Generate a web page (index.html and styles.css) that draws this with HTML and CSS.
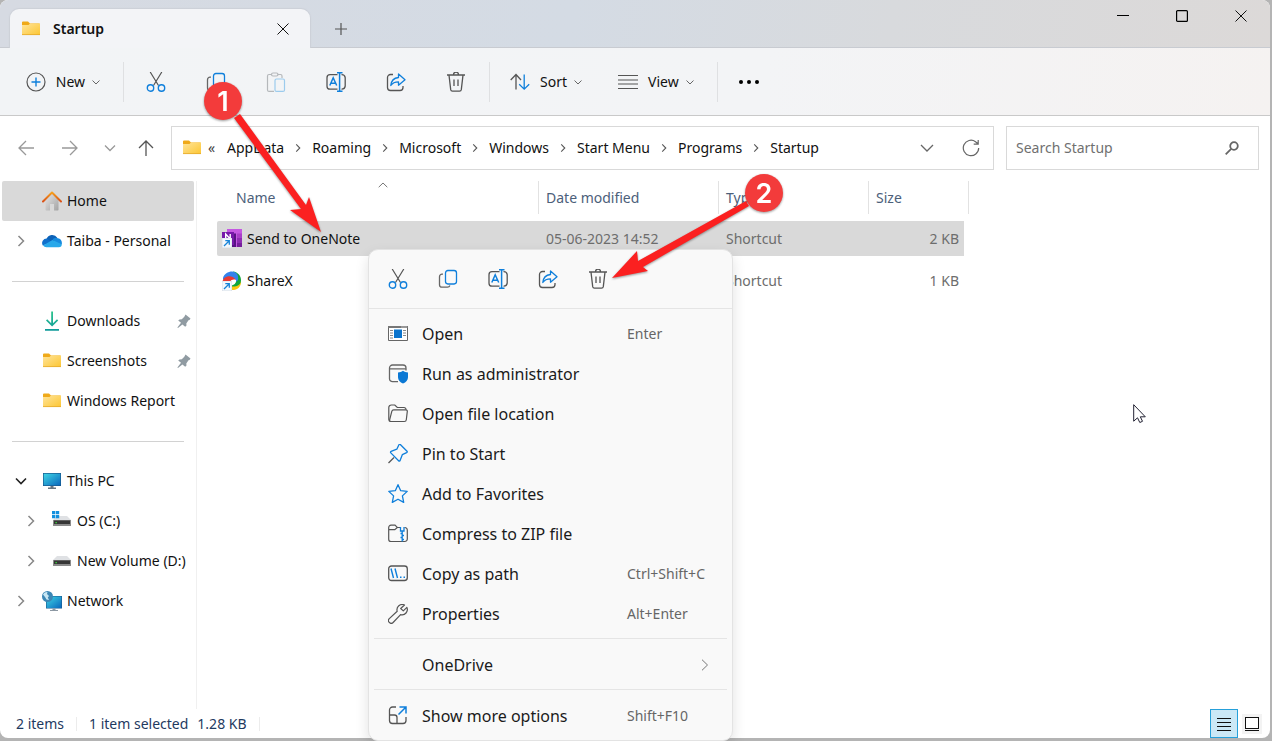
FILE: index.html
```html
<!DOCTYPE html>
<html lang="en">
<head>
  <meta charset="UTF-8" />
  <meta name="viewport" content="width=device-width, initial-scale=1.0"/>
  <title>Startup</title>
  <link rel="stylesheet" href="styles.css">
</head>
<body>

  <!-- Shared icons -->
  <svg class="sprite" aria-hidden="true">
    <defs>
      <linearGradient id="gFolder" x1="0" y1="0" x2="1" y2="1"><stop offset="0" stop-color="#ffe49a"/><stop offset="1" stop-color="#fcc633"/></linearGradient>
      <linearGradient id="gRoof" x1="0" y1="0" x2="0" y2="1"><stop offset="0" stop-color="#f5a01d"/><stop offset="1" stop-color="#d9531a"/></linearGradient>
      <linearGradient id="gWall" x1="0" y1="0" x2="1" y2="1"><stop offset="0" stop-color="#e6e6e6"/><stop offset="1" stop-color="#a3a3a3"/></linearGradient>
      <linearGradient id="gScreen" x1="0" y1="0" x2="1" y2="1"><stop offset="0" stop-color="#3fd5e5"/><stop offset="1" stop-color="#0a68bd"/></linearGradient>
      <linearGradient id="gDown" x1="0" y1="0" x2="0" y2="1"><stop offset="0" stop-color="#2cc48d"/><stop offset="1" stop-color="#0f9a9a"/></linearGradient>
    </defs>
    <symbol id="folder" viewBox="0 0 20 20">
      <path d="M1 3.500a1 1 0 0 1 1-1h5l2 2h9.500v11H1z" fill="#efa919"/>
      <path d="M1 6h6.500L9 4.500h10V15.500a.5.5 0 0 1-.5.5h-17a.5.5 0 0 1-.5-.5z" fill="url(#gFolder)"/>
      <path d="M1 15.600h18" stroke="#e5a82c" stroke-width=".8"/>
    </symbol>
    <symbol id="down" viewBox="0 0 10 10"><path d="M1.500 3.500 5 7l3.500-3.500" fill="none" stroke="currentColor"/></symbol>
    <symbol id="right" viewBox="0 0 10 14"><path d="M2.500 2 7.500 7l-5 5" fill="none" stroke="currentColor" stroke-width="1.500"/></symbol>
    <symbol id="close" viewBox="0 0 12 12"><path d="M.5.5l11 11m0-11-11 11" fill="none" stroke="currentColor"/></symbol>
    <symbol id="cut" viewBox="0 0 20 20" fill="none">
      <path d="M4.200 0l8.300 13.500M15.800 0 7.500 13.500" stroke="#555" stroke-width="1.200"/>
      <circle cx="4.500" cy="16" r="3.200" stroke="#0f7fdb" stroke-width="1.400"/><circle cx="15.500" cy="16" r="3.200" stroke="#0f7fdb" stroke-width="1.400"/>
    </symbol>
    <symbol id="copy" viewBox="0 0 20 20" fill="none" stroke-width="1.300">
      <path d="M5 5.200H4A2.500 2.500 0 0 0 1.500 7.700v8A2.500 2.500 0 0 0 4 18.200h5.500a2.500 2.500 0 0 0 2.400-1.700" stroke="#666"/>
      <rect x="7.500" y="1.500" width="11" height="13.500" rx="2.400" stroke="#0f7fdb"/>
    </symbol>
    <symbol id="paste" viewBox="0 0 20 20" fill="none" stroke-width="1.200">
      <path d="M6 2.500H3A1.500 1.500 0 0 0 1.500 4v14A1.500 1.500 0 0 0 3 19.400h5M11.500 2.500h3A1.500 1.500 0 0 1 16 4v2" stroke="#b5b8bb"/>
      <rect x="5.500" y="1" width="6.500" height="3" rx="1.500" stroke="#b5b8bb"/>
      <rect x="9" y="7" width="9.500" height="12.400" rx="1.500" stroke="#9ccbed"/>
    </symbol>
    <symbol id="rename" viewBox="0 0 20 20" fill="none" stroke-width="1.300">
      <path d="M11.500 2.700H4A3 3 0 0 0 1 5.700v8.500a3 3 0 0 0 3 3h7.500M15.500 2.700a3.500 3.500 0 0 1 3.700 3v8.500a3.500 3.500 0 0 1-3.700 3" stroke="#555"/>
      <path d="M3.800 13.500 7.200 5.800l3.500 7.700M5 11.200h4.500M11 .8h5.500M11 19.200h5.500M13.600.8v18.400" stroke="#0f7fdb" stroke-width="1.500"/>
    </symbol>
    <symbol id="share" viewBox="0 0 20 20" fill="none" stroke-width="1.300">
      <path d="M7 2.500H4.500a3 3 0 0 0-3 3v10a3 3 0 0 0 3 3h9.500a3 3 0 0 0 3-3v-1.500" stroke="#555"/>
      <path d="M12.500 2l6.500 5.700-6.500 5.500v-3.400c-3.500 0-6 1-7.700 3.700.4-4.500 3.200-7.500 7.700-8z" stroke="#0f7fdb" stroke-linejoin="round"/>
    </symbol>
    <symbol id="trash" viewBox="0 0 20 20" fill="none" stroke="#555" stroke-width="1.300">
      <path d="M1 3h18M7.500 2.700a2.500 2.500 0 0 1 5 0M3 3.200l1.700 14.500a1.800 1.800 0 0 0 1.800 1.500h7a1.800 1.800 0 0 0 1.800-1.500L17 3.200M8 7.500V14M12 7.500V14"/>
    </symbol>
    <symbol id="pinned" viewBox="0 0 14 14">
      <path d="M8.500.5l5 4-1 1.500-1 .2-2.200 3.200.2 2.100-1.300 1.200-2.800-2.300L1 14l-.6-.6 3.600-4.600L1.200 6.600l1.300-1.100 2.300-.2 2.500-2.600z" fill="#909ba2"/>
    </symbol>
    <symbol id="shortcut" viewBox="0 0 10 10">
      <path d="M0 0h10v10H0z" fill="#f4f8fc" stroke="#c6d1dc" stroke-width=".6"/>
      <path d="M2 8l5-5M3.300 2.700h4v4" fill="none" stroke="#1683d8" stroke-width="1.300"/>
    </symbol>
    <symbol id="drive" viewBox="0 0 20 20">
      <path d="M5 5h10l4 4H1z" fill="#dfe1e4"/><path d="M1 9h18v6H1z" fill="#8b8b8b"/><path d="M2 9.500h16v3.500H2z" fill="#363636"/><path d="M3.500 11h1.300v1.300H3.500z" fill="#3de63d"/>
    </symbol>
  </svg>

  <div class="window">
    <header class="titlebar">
      <div class="tab">
        <svg class="icon"><use href="#folder"/></svg>
        <span class="tab-title">Startup</span>
        <button class="tab-close" aria-label="Close tab"><svg class="icon-x"><use href="#close"/></svg></button>
      </div>
      <button class="tab-new" aria-label="New tab"><svg width="14" height="14" viewBox="0 0 14 14"><path d="M7 1v12M1 7h12" stroke="#555" stroke-width="1.200"/></svg></button>
      <div class="caption">
        <button aria-label="Minimize"><svg width="12" height="12"><path d="M0 5.500h12" stroke="#000"/></svg></button>
        <button aria-label="Maximize"><svg width="12" height="12"><rect x=".6" y=".6" width="10.800" height="10.800" rx="1" fill="none" stroke="#000" stroke-width="1.200"/></svg></button>
        <button aria-label="Close"><svg class="icon-x"><use href="#close"/></svg></button>
      </div>
    </header>

    <div class="toolbar">
      <button class="tool-text tool-new">
        <svg class="icon" viewBox="0 0 20 20" fill="none"><circle cx="10" cy="10" r="9" stroke="#555" stroke-width="1.200"/><path d="M10 5.500v9M5.500 10h9" stroke="#0f7fdb" stroke-width="1.400"/></svg>
        <span>New</span>
        <svg class="chev"><use href="#down"/></svg>
      </button>
      <div class="tool-icons">
        <button aria-label="Cut"><svg class="icon"><use href="#cut"/></svg></button>
        <button aria-label="Copy"><svg class="icon"><use href="#copy"/></svg></button>
        <button aria-label="Paste" disabled><svg class="icon"><use href="#paste"/></svg></button>
        <button aria-label="Rename"><svg class="icon"><use href="#rename"/></svg></button>
        <button aria-label="Share"><svg class="icon"><use href="#share"/></svg></button>
        <button aria-label="Delete"><svg class="icon"><use href="#trash"/></svg></button>
      </div>
      <div class="tool-group">
        <button class="tool-text">
          <svg class="icon" viewBox="0 0 20 20" fill="none" stroke-width="1.300"><path d="M.7 8 6 2.500 11 8M6 2.500v15" stroke="#555"/><path d="M9.200 12.200l5 5 5-5M14.200 2.500v14.700" stroke="#0f7fdb"/></svg>
          <span>Sort</span>
          <svg class="chev"><use href="#down"/></svg>
        </button>
        <button class="tool-text">
          <svg class="icon" viewBox="0 0 20 20"><path d="M0 3.500h20M0 8h20M0 12h20M0 16.500h20" stroke="#555" stroke-width="1.200"/></svg>
          <span>View</span>
          <svg class="chev"><use href="#down"/></svg>
        </button>
      </div>
      <button class="tool-more" aria-label="See more"><svg width="20" height="4"><circle cx="2" cy="2" r="2"/><circle cx="10" cy="2" r="2"/><circle cx="18" cy="2" r="2"/></svg></button>
    </div>

    <div class="navrow">
      <div class="nav-buttons">
        <button aria-label="Back"><svg class="nav-icon" viewBox="0 0 16 16"><path d="M16 8H1M8 1 1 8l7 7"/></svg></button>
        <button aria-label="Forward"><svg class="nav-icon" viewBox="0 0 16 16"><path d="M0 8h15M8 1l7 7-7 7"/></svg></button>
        <button class="narrow" aria-label="Recent locations"><svg class="nav-icon" viewBox="0 0 16 16"><path d="M3 5.500l5 5 5-5"/></svg></button>
        <button class="narrow up" aria-label="Up"><svg class="nav-icon" viewBox="0 0 16 16"><path d="M8 16V1M1 8l7-7 7 7"/></svg></button>
      </div>
      <div class="address">
        <svg class="icon"><use href="#folder"/></svg>
        <span class="more">«</span>
        <nav class="crumbs" aria-label="Path">
          <a href="#">AppData</a><svg class="sep"><use href="#right"/></svg>
          <a href="#">Roaming</a><svg class="sep"><use href="#right"/></svg>
          <a href="#">Microsoft</a><svg class="sep"><use href="#right"/></svg>
          <a href="#">Windows</a><svg class="sep"><use href="#right"/></svg>
          <a href="#">Start Menu</a><svg class="sep"><use href="#right"/></svg>
          <a href="#">Programs</a><svg class="sep"><use href="#right"/></svg>
          <a href="#">Startup</a>
        </nav>
        <button aria-label="Previous locations"><svg width="14" height="8" viewBox="0 0 14 8"><path d="M1 1l6 6 6-6" fill="none" stroke="#666" stroke-width="1.300"/></svg></button>
        <button aria-label="Refresh"><svg width="18" height="18" viewBox="0 0 18 18"><path d="M16.700 9A7.700 7.700 0 1 1 13.500 2.700L16 4.800M16.200 1v4.200h-4.500" fill="none" stroke="#666" stroke-width="1.200"/></svg></button>
      </div>
      <label class="search">
        <input type="search" placeholder="Search Startup" aria-label="Search Startup">
        <svg width="14" height="14" viewBox="0 0 14 14"><circle cx="9" cy="5" r="3.800" fill="none" stroke="#666" stroke-width="1.800"/><path d="M6.200 7.800.7 13.300" stroke="#666" stroke-width="1.800"/></svg>
      </label>
    </div>

    <div class="main">
      <nav class="sidebar" aria-label="Folders">
        <a class="side-item active" href="#">
          <span class="twist"></span>
          <svg class="icon" viewBox="0 0 20 20"><path d="M3.500 8.500 10 2.500l6.500 6v10.300a.7.7 0 0 1-.7.700H12v-6.500H8v6.500H4.200a.7.7 0 0 1-.7-.7z" fill="url(#gWall)"/><path d="M1 10.500 10 1.500l9 9" fill="none" stroke="url(#gRoof)" stroke-width="2" stroke-linecap="round" stroke-linejoin="round"/></svg>
          <span>Home</span>
        </a>
        <a class="side-item" href="#">
          <span class="twist"><svg class="arrow"><use href="#right"/></svg></span>
          <svg class="icon" viewBox="0 0 20 20"><path d="M4.500 8a6 6 0 0 1 10.800-1.200L11 12 3 10z" fill="#0c62b8"/><path d="M4.700 7.500a4.600 4.600 0 0 0-3.900 7l9-3.500z" fill="#1070cc"/><path d="M14 6.800a5 5 0 0 0-3.500 1.500l5 5.500 4.300-.6c.6-3-1.200-5.500-3.800-5.900z" fill="#168ade"/><path d="M1 14.500 10.500 9l9.300 4.200a3 3 0 0 1-3 3H4.500A4.300 4.300 0 0 1 1 14.500z" fill="#28a8ea"/></svg>
          <span>Taiba - Personal</span>
        </a>
        <hr>
        <a class="side-item" href="#">
          <span class="twist"></span>
          <svg class="icon" viewBox="0 0 20 20"><path d="M9.200.5h1.800v11.800l4-4 1.200 1.200-6.100 6.100L4 9.500l1.200-1.200 4 4zM3 18h14v1.700H3z" fill="url(#gDown)"/></svg>
          <span>Downloads</span>
          <svg class="pin"><use href="#pinned"/></svg>
        </a>
        <a class="side-item" href="#">
          <span class="twist"></span>
          <svg class="icon"><use href="#folder"/></svg>
          <span>Screenshots</span>
          <svg class="pin"><use href="#pinned"/></svg>
        </a>
        <a class="side-item" href="#">
          <span class="twist"></span>
          <svg class="icon"><use href="#folder"/></svg>
          <span>Windows Report</span>
        </a>
        <hr>
        <a class="side-item" href="#">
          <span class="twist"><svg width="12" height="8" viewBox="0 0 12 8"><path d="M1 1.500 6 6.500l5-5" fill="none" stroke="#222" stroke-width="1.600"/></svg></span>
          <svg class="icon" viewBox="0 0 20 20"><path d="M1 2h18v13H1z" fill="#17598f"/><path d="M1.700 2.700h16.600v11.600H1.700z" fill="url(#gScreen)"/><path d="M8.500 15h3v1.500h2.500V18H6v-1.500h2.500z" fill="#687581"/></svg>
          <span>This PC</span>
        </a>
        <a class="side-item child" href="#">
          <span class="twist"><svg class="arrow"><use href="#right"/></svg></span>
          <svg class="icon" viewBox="0 0 20 20"><use href="#drive"/><path d="M0 0h3.300v3.300H0zM3.900 0h3.300v3.300H3.900zM0 3.900h3.300v3.300H0zM3.900 3.900h3.300v3.300H3.900z" fill="#1390df"/></svg>
          <span>OS (C:)</span>
        </a>
        <a class="side-item child" href="#">
          <span class="twist"><svg class="arrow"><use href="#right"/></svg></span>
          <svg class="icon"><use href="#drive"/></svg>
          <span>New Volume (D:)</span>
        </a>
        <a class="side-item" href="#">
          <span class="twist"><svg class="arrow"><use href="#right"/></svg></span>
          <svg class="icon" viewBox="0 0 20 20"><path d="M4 5h16v12.500H4z" fill="#17598f"/><path d="M4.600 5.600h14.800v11.300H4.600z" fill="url(#gScreen)"/><path d="M10.500 17.500h3V19h2.500v1H8v-1h2.500z" fill="#8c98a3"/><circle cx="5.500" cy="5.500" r="5.500" fill="#3d87b5"/><path d="M1 3.500C2 1.500 4 .8 5.500 1L5 3l2 2-1.200 1.500L7 9 4.500 8.500 3 6z" fill="#c7e6f3"/></svg>
          <span>Network</span>
        </a>
      </nav>

      <div class="files">
        <table>
          <thead>
            <tr>
              <th class="col-name">Name<svg class="sort-mark" width="10" height="6" viewBox="0 0 10 6"><path d="M.7 5.200 5 1l4.300 4.200" fill="none" stroke="#777"/></svg></th>
              <th class="col-date">Date modified</th>
              <th class="col-type">Type</th>
              <th class="col-size">Size</th>
            </tr>
          </thead>
          <tbody>
            <tr class="selected">
              <td>
                <div class="file">
                  <svg class="icon" viewBox="0 0 20 20"><path d="M5 0h15v18H5z" fill="#c457e2"/><path d="M15 4.500h5V9h-5z" fill="#a93fc9"/><path d="M15 9h5v4.500h-5z" fill="#8f2db3"/><path d="M15 13.500h5V18h-5z" fill="#751f9c"/><path d="M5 4.500h9V18H5z" fill="#571384"/><path d="M0 3h12v13H0z" fill="#7719aa"/><path d="M3.700 10V5l4.500 5V5" fill="none" stroke="#fff" stroke-width="1.400"/><use href="#shortcut" y="9" width="10" height="10"/></svg>
                  Send to OneNote
                </div>
              </td>
              <td>05-06-2023 14:52</td>
              <td>Shortcut</td>
              <td class="size">2 KB</td>
            </tr>
            <tr>
              <td>
                <div class="file">
                  <svg class="icon" viewBox="0 0 20 20"><path d="M9 14c4 0 7-1 10-4 .5 6-4 9.500-10 9z" fill="#fbc610"/><path d="M11 .5c5 .5 8.200 4.500 8 9-.3 4.500-4 6.500-10 6V14c4-1 6-4 4.500-7z" fill="#12a53c"/><path d="M1 7C2 3 6 .5 10 .5c4.500 0 7 4 6 8.500l-2 2C12.500 6.500 8 5 1 9z" fill="#3382eb"/><path d="M.5 11C1 5.500 9 2.500 14 9c-3-.5-5 .5-6 3H.5z" fill="#e93932"/><path d="M8 11c1-2.500 4-3 6-2 .5 3-2 5.500-5.500 5.500z" fill="#fff"/><use href="#shortcut" y="10" width="10" height="10"/></svg>
                  ShareX
                </div>
              </td>
              <td></td>
              <td>Shortcut</td>
              <td class="size">1 KB</td>
            </tr>
          </tbody>
        </table>
      </div>
    </div>

    <footer class="status">
      <span class="count">2 items</span>
      <span class="selection">1 item selected<span>1.28 KB</span></span>
      <div class="views">
        <button class="on" aria-label="Details view"><svg width="14" height="14"><path d="M0 1.500h14M0 5.500h14M0 9.500h14M0 13.500h14" stroke="#111"/></svg></button>
        <button aria-label="Large icons view"><svg width="14" height="14"><rect x=".5" y=".5" width="13" height="11" fill="#fff" stroke="#111"/><path d="M0 13.500h14" stroke="#111"/></svg></button>
      </div>
    </footer>
  </div>

  <div class="menu" role="menu">
    <div class="menu-icons">
      <button aria-label="Cut"><svg class="icon"><use href="#cut"/></svg></button>
      <button aria-label="Copy"><svg class="icon"><use href="#copy"/></svg></button>
      <button aria-label="Rename"><svg class="icon"><use href="#rename"/></svg></button>
      <button aria-label="Share"><svg class="icon"><use href="#share"/></svg></button>
      <button aria-label="Delete"><svg class="icon"><use href="#trash"/></svg></button>
    </div>
    <div class="menu-group">
      <button role="menuitem">
        <svg class="icon" viewBox="0 0 20 20"><path d="M.5 2.500h19v14H.5z" fill="#fff" stroke="#666"/><path d="M0 2h20v2H0z" fill="#777"/><path d="M6 5.500h8v8.500H6z" fill="#0b74cd"/><path d="M2 6.500h3M2 9h3M2 11.500h3M2 14h3M15 6.500h3M15 9h3M15 11.500h3" stroke="#888"/><path d="M13.500 3h1m1 0h1m1 0h1" stroke="#fff"/></svg>
        <span>Open</span><kbd>Enter</kbd>
      </button>
      <button role="menuitem">
        <svg class="icon" viewBox="0 0 20 20"><path d="M10 17.700H4.500a3 3 0 0 1-3-3V4a3 3 0 0 1 3-3H15a3 3 0 0 1 3 3v2.500M1.700 4.800h16.200" fill="none" stroke="#666" stroke-width="1.300"/><path d="M15 6.800c1.500 1.200 3 1.600 5 1.700v4.700c0 3-2 5-5 6.300-3-1.300-5-3.300-5-6.300V8.500c2-.1 3.500-.5 5-1.700z" fill="#0b78d4"/></svg>
        <span>Run as administrator</span>
      </button>
      <button role="menuitem">
        <svg class="icon" viewBox="0 0 20 20" fill="none" stroke="#555" stroke-width="1.200"><path d="M2.500 17.500A2 2 0 0 1 .8 15.500v-12A2.500 2.500 0 0 1 3.300 1h3.500l2.500 2.500h6.500A2 2 0 0 1 18 5.700"/><path d="M2.500 17.500c-.8-.2-1-1-.8-1.800L3.800 7.300A2 2 0 0 1 5.700 5.800h12.200c1 0 1.500.8 1.400 1.600l-1 8.300a2 2 0 0 1-2 1.800z"/></svg>
        <span>Open file location</span>
      </button>
      <button role="menuitem">
        <svg class="icon" viewBox="0 0 20 20" fill="none" stroke-width="1.300"><path d="M6 13.500.5 19" stroke="#555"/><path d="M12.300.5 19 7.200c.5.600.2 1.200-.4 1.500l-4.300 2-2.200 5.700c-.3.700-1 .8-1.500.3L2.800 8.900c-.5-.5-.4-1.200.3-1.500l5.700-2.200 2-4.300c.3-.7 1-.9 1.500-.4z" stroke="#0f7fdb" stroke-linejoin="round"/></svg>
        <span>Pin to Start</span>
      </button>
      <button role="menuitem">
        <svg class="icon" viewBox="0 0 20 20"><path d="M10 .7l2.700 6 6.500.7-4.800 4.500 1.300 6.500L10 15.200l-5.700 3.200 1.300-6.500L.8 7.400 7.300 6.700z" fill="none" stroke="#0f7fdb" stroke-width="1.300" stroke-linejoin="round"/></svg>
        <span>Add to Favorites</span>
      </button>
      <button role="menuitem">
        <svg class="icon" viewBox="0 0 20 20" fill="none" stroke-width="1.200"><path d="M12 3.500H9.300L7 1.200H3A2.300 2.300 0 0 0 .7 3.500v11.700A2.300 2.300 0 0 0 3 17.500h13.500a2.500 2.500 0 0 0 2.800-2.500V6a2.500 2.500 0 0 0-2.800-2.500M.8 5.700h6L9.300 3.500" stroke="#555"/><path d="M12.500 3v4h3.500V3M14.200 7v10.500M14.200 9.500H12.500M14.200 11.500H16M14.200 13.500H12.500M14.200 15.500H16" stroke="#0f7fdb" stroke-width="1.300"/></svg>
        <span>Compress to ZIP file</span>
      </button>
      <button role="menuitem">
        <svg class="icon" viewBox="0 0 20 20" fill="none"><rect x=".7" y="2" width="18.600" height="14.500" rx="2.800" stroke="#555" stroke-width="1.300"/><path d="M3 4.500 5.500 14M7 4.500 9.500 14M12 13.200h1.500M15.500 13.200H17" stroke="#0f7fdb" stroke-width="1.400"/></svg>
        <span>Copy as path</span><kbd>Ctrl+Shift+C</kbd>
      </button>
      <button role="menuitem">
        <svg class="icon" viewBox="0 0 20 20"><path d="M16.500 1a5.300 5.300 0 0 0-7.300 6.300L1.300 14.600a2.700 2.700 0 0 0 3.800 3.900l7.500-7.900a5.300 5.300 0 0 0 6.300-7.200l-3.600 3.500-2.600-2.400z" fill="none" stroke="#555" stroke-width="1.200" stroke-linejoin="round"/></svg>
        <span>Properties</span><kbd>Alt+Enter</kbd>
      </button>
    </div>
    <div class="menu-group">
      <button role="menuitem">
        <span class="icon"></span>
        <span>OneDrive</span>
        <svg class="submenu" width="8" height="12" viewBox="0 0 8 12"><path d="M1 .7 6.500 6 1 11.300" fill="none" stroke="#777"/></svg>
      </button>
    </div>
    <div class="menu-group">
      <button role="menuitem">
        <svg class="icon" viewBox="0 0 20 20" fill="none" stroke-width="1.300"><path d="M8 1H4.500a3 3 0 0 0-3 3v10.500a3 3 0 0 0 3 3H15a3 3 0 0 0 3-3V11M1.500 9h5A2.500 2.500 0 0 1 9 11.500v6" stroke="#555"/><path d="M11.500 1H18v6.500M18 1 10.500 8.500" stroke="#0f7fdb" stroke-width="1.500"/></svg>
        <span>Show more options</span><kbd>Shift+F10</kbd>
      </button>
    </div>
  </div>

  <svg class="cursor" width="13" height="20" viewBox="0 0 13 20"><path d="M.7.700v16.500L4.500 13.800l2.300 4.700 2.700-1.200-2.200-4.500h5z" fill="#fff" stroke="#223" stroke-width="1"/></svg>

  <!-- Numbered step arrows -->
  <svg class="steps" width="800" height="300" viewBox="0 0 800 300">
    <g fill="#fb2020">
      <path d="M234 118l6-4 66 91 3-8 12 35-31-22 11-1z"/>
      <path d="M746 201l3 5-106 61 5 4-36 7 25-27 1 10z"/>
    </g>
    <circle cx="223" cy="101" r="19" fill="#f33b3b"/>
    <circle cx="764" cy="193" r="19" fill="#f33b3b"/>
    <text x="223" y="111">1</text>
    <text x="764" y="203">2</text>
  </svg>

</body>
</html>
```
FILE: styles.css
```css
* {
  box-sizing: border-box;
}

body {
  margin: 0;
  position: relative;
  min-height: 100vh;
  padding: 0 2px 3px 0;
  display: flex;
  background: #b4b4b4;
  font-family: 'Noto Sans', 'Open Sans', sans-serif;
  font-size: 14px;
  line-height: 20px;
  color: #111;
}

button {
  margin: 0;
  padding: 0;
  border: none;
  background: none;
  font: inherit;
  color: inherit;
  display: flex;
  align-items: center;
  justify-content: center;
}

a {
  color: inherit;
  text-decoration: none;
}

svg {
  flex: none;
  display: block;
}

.sprite {
  position: absolute;
  width: 0;
  height: 0;
}

.icon {
  width: 20px;
  height: 20px;
  flex: none;
}

.icon-x {
  width: 12px;
  height: 12px;
}

.window {
  flex: 1;
  display: flex;
  flex-direction: column;
  background: #fff;
  border-radius: 8px;
  overflow: hidden;
}

/* title bar */
.titlebar {
  display: flex;
  align-items: flex-end;
  height: 48px;
  padding-left: 10px;
  background: linear-gradient(100deg, #d6dae2, #d4dbe4 45%, #d8dadd 70%, #dcd9d8);
  box-shadow: inset 0 -1px #c8cbd1;
}

.tab {
  display: flex;
  align-items: center;
  width: 300px;
  height: 39px;
  padding: 0 21px 0 11px;
  background: #f3f4f7;
  border-radius: 9px 9px 0 0;
  box-shadow: 0 0 1px 1px #ccd0d8;
  clip-path: inset(-2px -2px 0 -2px);
}

.tab-title {
  flex: 1;
  margin-left: 12px;
  font-weight: 600;
}

.tab-new {
  width: 62px;
  height: 38px;
}

.caption {
  display: flex;
  align-self: flex-start;
  margin-left: auto;
}

.caption button {
  width: 59px;
  height: 32px;
}

/* command bar */
.toolbar {
  display: flex;
  align-items: center;
  height: 68px;
  background: linear-gradient(100deg, #f2f4f6, #f3f4f6 60%, #f5f2f1);
  border-bottom: 1px solid #c9c9c9;
}

.tool-text {
  gap: 10px;
}

.tool-new,
.tool-group {
  height: 40px;
}

.chev {
  width: 10px;
  height: 10px;
  color: #666;
  margin-left: -4px;
}

.tool-new {
  width: 124px;
  border-right: 1px solid #dfe0e2;
  padding-left: 4px;
}

.tool-icons {
  display: flex;
  padding: 0 3px 0 2px;
  border-right: 1px solid #dfe0e2;
}

.tool-icons button {
  width: 60px;
  height: 40px;
}

.tool-group {
  display: flex;
  align-items: center;
  gap: 35px;
  padding: 0 22px 0 20px;
  border-right: 1px solid #dfe0e2;
}

.tool-more {
  width: 62px;
  height: 40px;
}

/* address row */
.navrow {
  display: flex;
  align-items: center;
  padding: 10px 11px 11px 0;
}

.nav-buttons {
  display: flex;
  width: 171px;
  padding-left: 4px;
}

.nav-buttons button {
  width: 44px;
  height: 40px;
}

.nav-buttons .narrow {
  width: 36px;
}

.nav-icon {
  width: 16px;
  height: 16px;
  fill: none;
  stroke: #999;
  stroke-width: 1.3;
}

.up .nav-icon {
  stroke: #555;
}

.address {
  flex: 1;
  display: flex;
  align-items: center;
  height: 44px;
  padding-left: 10px;
  border: 1px solid #d9d9d9;
}

.address button {
  width: 44px;
  height: 42px;
}

.more {
  width: 25px;
  padding-left: 6px;
  color: #444;
}

.crumbs {
  flex: 1;
  display: flex;
  align-items: center;
  gap: 10px;
}

.sep {
  width: 8px;
  height: 10px;
  color: #555;
}

.search {
  display: flex;
  align-items: center;
  width: 253px;
  height: 44px;
  margin-left: 12px;
  padding: 0 19px 0 9px;
  border: 1px solid #d9d9d9;
}

.search input {
  flex: 1;
  min-width: 0;
  padding: 0;
  border: none;
  outline: none;
  background: none;
  font: inherit;
}

.search input::placeholder {
  color: #707070;
}

/* content */
.main {
  flex: 1;
  display: flex;
}

.sidebar {
  width: 197px;
  padding: 0 2px;
  border-right: 1px solid #f0f0f0;
}

.side-item {
  display: flex;
  align-items: center;
  height: 40px;
  padding-right: 3px;
  border-radius: 2px;
  white-space: nowrap;
}

.side-item.active {
  background: #d9d9d9;
}

.twist {
  display: flex;
  justify-content: center;
  width: 38px;
  margin-right: 2px;
}

.child .twist {
  width: 48px;
  padding-left: 10px;
}

.arrow {
  width: 10px;
  height: 14px;
  color: #888;
}

.side-item .icon {
  margin-right: 5px;
}

.pin {
  width: 14px;
  height: 14px;
  margin-left: auto;
}

.sidebar hr {
  margin: 20px 10px 19px 10px;
  border: none;
  border-top: 1px solid #d2d2d2;
}

.files {
  flex: 1;
  padding-left: 20px;
}

table {
  width: 752px;
  margin-top: -7px;
  table-layout: fixed;
  border-collapse: separate;
  border-spacing: 0 7px;
}

th {
  position: relative;
  height: 33px;
  padding: 0 7px;
  border-right: 1px solid #e2e2e2;
  font-weight: normal;
  text-align: left;
  color: #4c607a;
}

.col-name {
  width: 322px;
  padding-left: 19px;
}

.col-date {
  width: 180px;
}

.col-type {
  width: 150px;
}

.sort-mark {
  position: absolute;
  top: 1px;
  left: 50%;
}

td {
  height: 35px;
  padding: 0 7px;
  color: #6d6d6d;
}

.file {
  display: flex;
  align-items: center;
  gap: 5px;
  margin-left: -2px;
  color: #111;
}

.selected td {
  background: #d9d9d9;
}

.selected td:first-child {
  border-radius: 2px 0 0 2px;
}

td.size {
  border-right: 5px solid transparent;
  background-clip: padding-box;
  padding-right: 5px;
  text-align: right;
}

/* status bar */
.status {
  display: flex;
  align-items: center;
  height: 29px;
  padding: 0 4px 0 16px;
  color: #1f3a5f;
}

.count,
.selection {
  padding-right: 12px;
  border-right: 1px solid #ececec;
  line-height: 14px;
}

.selection {
  padding-left: 12px;
}

.selection span {
  margin-left: 9px;
}

.views {
  display: flex;
  align-items: center;
  gap: 4px;
  margin-left: auto;
  padding-right: 4px;
}

.views button {
  width: 20px;
  height: 20px;
  background: #f3f3f3;
}

.views .on {
  width: 28px;
  height: 29px;
  background: #cbe8f6;
  border: 1px solid #26a0da;
}

/* context menu */
.menu {
  position: absolute;
  top: 249px;
  left: 368px;
  width: 365px;
  background: #f9f9f9;
  border: 1px solid #e3e3e3;
  border-radius: 10px;
  box-shadow: 0 6px 14px rgba(0, 0, 0, 0.12);
  color: #1b1b1b;
}

.menu-icons {
  display: flex;
  padding: 9px 4px;
  border-bottom: 1px solid #e5e5e5;
}

.menu-icons button {
  width: 50px;
  height: 40px;
}

.menu-group {
  margin: 0 5px;
  padding: 5px 0 4px;
}

.menu-group + .menu-group {
  border-top: 1px solid #e5e5e5;
  padding: 6px 0 4px;
}

.menu-group button {
  width: 100%;
  height: 40px;
  padding-left: 14px;
  justify-content: flex-start;
  gap: 14px;
  font-size: 16px;
}

.menu kbd {
  width: 86px;
  margin-left: auto;
  margin-right: 14px;
  font-family: inherit;
  font-size: 14px;
  text-align: left;
  white-space: nowrap;
  color: #666;
}

.submenu {
  margin-left: auto;
  margin-right: 18px;
}

.cursor {
  position: absolute;
  top: 404px;
  left: 1133px;
}

/* step arrows */
.steps {
  position: absolute;
  top: 0;
  left: 0;
  pointer-events: none;
  filter: drop-shadow(0 1px 1px rgba(0, 0, 0, 0.4));
}

.steps text {
  font-family: 'Inter', sans-serif;
  font-size: 27px;
  font-weight: 600;
  text-anchor: middle;
  fill: #fff;
}
```
